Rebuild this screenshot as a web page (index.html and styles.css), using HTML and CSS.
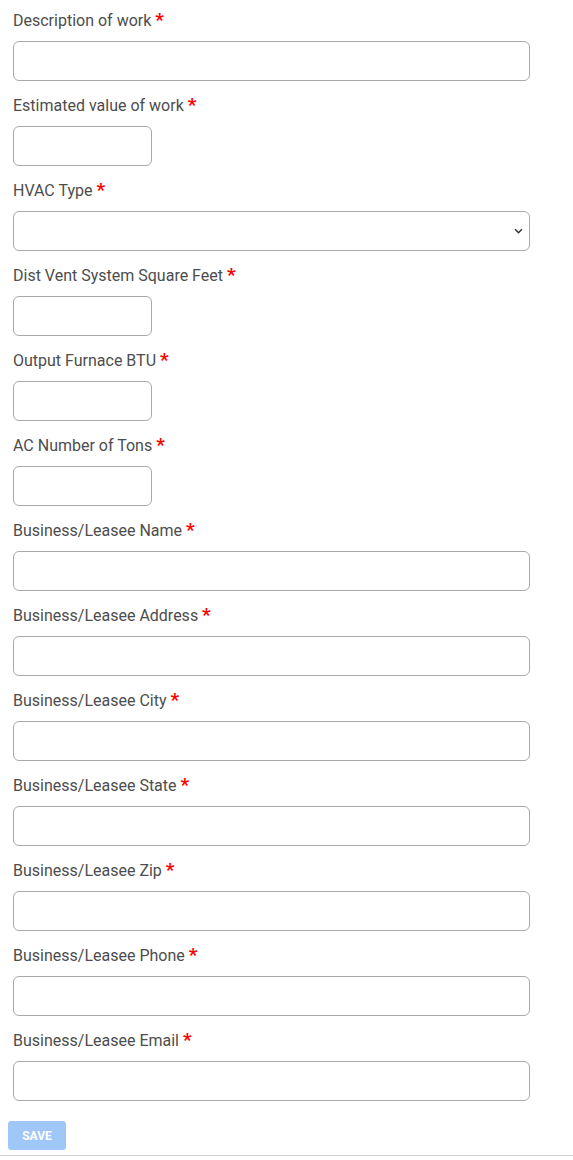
FILE: index.html
```html
<!DOCTYPE html>
<html>
<head>
<meta charset="utf-8">
<link rel="stylesheet" href="styles.css">
</head>
<body>
<form class="form">
  <div class="field"><label class="label">Description of work <span class="req">*</span></label><input class="input" type="text"></div>
  <div class="field"><label class="label">Estimated value of work <span class="req">*</span></label><input class="input input-sm" type="text"></div>
  <div class="field"><label class="label">HVAC Type <span class="req">*</span></label><select class="input select"><option></option></select></div>
  <div class="field"><label class="label">Dist Vent System Square Feet <span class="req">*</span></label><input class="input input-sm" type="text"></div>
  <div class="field"><label class="label">Output Furnace BTU <span class="req">*</span></label><input class="input input-sm" type="text"></div>
  <div class="field"><label class="label">AC Number of Tons <span class="req">*</span></label><input class="input input-sm" type="text"></div>
  <div class="field"><label class="label">Business/Leasee Name <span class="req">*</span></label><input class="input" type="text"></div>
  <div class="field"><label class="label">Business/Leasee Address <span class="req">*</span></label><input class="input" type="text"></div>
  <div class="field"><label class="label">Business/Leasee City <span class="req">*</span></label><input class="input" type="text"></div>
  <div class="field"><label class="label">Business/Leasee State <span class="req">*</span></label><input class="input" type="text"></div>
  <div class="field"><label class="label">Business/Leasee Zip <span class="req">*</span></label><input class="input" type="text"></div>
  <div class="field"><label class="label">Business/Leasee Phone <span class="req">*</span></label><input class="input" type="text"></div>
  <div class="field"><label class="label">Business/Leasee Email <span class="req">*</span></label><input class="input" type="text"></div>
  <div class="actions"><button class="save" type="button" disabled>SAVE</button></div>
</form>
</body>
</html>
```
FILE: styles.css
```css
html, body {
  margin: 0;
  padding: 0;
  background: #fff;
}
body {
  font-family: Roboto, "Liberation Sans", Arial, sans-serif;
  color: #4d4d4d;
}
.form {
  width: 573px;
  padding-top: 9px;
  border-bottom: 1px solid #cfcfcf;
  box-sizing: border-box;
}
.field {
  display: flex;
  flex-direction: column;
  align-items: flex-start;
  padding: 0 0 13px 13px;
}
.label {
  display: block;
  font-size: 16px;
  line-height: 22px;
  height: 22px;
  margin-top: 1px;
  margin-bottom: 9px;
  color: #4d4d4d;
}
.req {
  color: #ff0000;
  font-weight: 700;
  font-size: 19px;
  line-height: 0;
}
.input {
  box-sizing: border-box;
  width: 517px;
  height: 40px;
  border: 1px solid #a9a9a9;
  border-radius: 6px;
  background: #fff;
  margin: 0;
  padding: 0 10px;
  font-family: inherit;
  font-size: 15px;
}
.input-sm {
  width: 139px;
}
.select {
  appearance: none;
  -webkit-appearance: none;
  background-image: url("data:image/svg+xml,%3Csvg xmlns='http://www.w3.org/2000/svg' width='10' height='7' viewBox='0 0 10 7'%3E%3Cpath d='M1 1.5l4 4 4-4' fill='none' stroke='%23333' stroke-width='1.8'/%3E%3C/svg%3E");
  background-repeat: no-repeat;
  background-position: right 6px center;
  background-size: 9px 6px;
}
.actions {
  padding: 7px 0 5px 8px;
}
.save {
  width: 58px;
  height: 29px;
  border: none;
  border-radius: 3px;
  background: #9fc8f9;
  color: #fff;
  font-family: Roboto, "Liberation Sans", Arial, sans-serif;
  font-weight: 700;
  font-size: 12px;
  padding: 0;
  letter-spacing: 0;
}
```
